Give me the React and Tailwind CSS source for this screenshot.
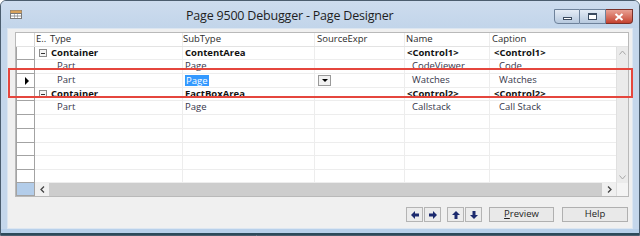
import React from "react";

const rows = [
  { h: "h-[13px]", kind: "container", type: "Container", sub: "ContentArea", name: "<Control1>", cap: "<Control1>" },
  { h: "h-[14px]", kind: "part", type: "Part", sub: "Page", name: "CodeViewer", cap: "Code" },
  { h: "h-[14px]", kind: "part", type: "Part", sub: "Page", name: "Watches", cap: "Watches", current: true },
  { h: "h-[13px]", kind: "container", type: "Container", sub: "FactBoxArea", name: "<Control2>", cap: "<Control2>" },
  { h: "h-[14px]", kind: "part", type: "Part", sub: "Page", name: "Callstack", cap: "Call Stack" },
  { h: "h-[14px]", kind: "empty" },
  { h: "h-[14px]", kind: "empty" },
  { h: "h-[13px]", kind: "empty" },
  { h: "h-[14px]", kind: "empty" },
  { h: "h-[13px]", kind: "empty" },
];

const ExpandBox = () => (
  <span className="flex items-center justify-center w-[8px] h-[8px] border border-[#8c8c8c] bg-[#f4f4f4] ml-[4px]">
    <span className="block w-[4px] h-[1px] bg-[#333]" />
  </span>
);

const GridRow = ({ r }) => {
  const bold = r.kind === "container";
  const indent = r.kind === "part";
  const txt = bold ? "font-bold text-[#111]" : "text-[#36364a]";
  return (
    <div className={`flex ${r.h}`}>
      <div className="w-[19px] border border-t-0 border-[#a3a3a3] bg-white flex items-center justify-center">
        {r.current && (
          <span className="block w-0 h-0 border-y-[4px] border-y-transparent border-l-[4px] border-l-black ml-[2px]" />
        )}
      </div>
      <div className="w-[14px] border-b border-[#ededed] flex items-center">
        {bold && <ExpandBox />}
      </div>
      <div className={`w-[134px] border-b border-r border-[#ededed] flex items-center ${indent ? "pl-[8px]" : "pl-[2px]"} ${txt}`}>
        {r.type}
      </div>
      <div className={`w-[132px] border-b border-r border-[#ededed] flex items-center pl-[2px] ${txt}`}>
        {r.current ? (
          <span className="bg-[#3399ff] text-white leading-[11px] px-[1px]">{r.sub}</span>
        ) : (
          r.sub
        )}
      </div>
      <div className="w-[90px] border-b border-r border-[#ededed] flex items-center pl-[3px]">
        {r.current && (
          <span className="flex items-center justify-center w-[13px] h-[11px] border border-[#9a9a9a] bg-[#f2f2f2]">
            <span className="block w-0 h-0 border-x-[3px] border-x-transparent border-t-[3px] border-t-black" />
          </span>
        )}
      </div>
      <div className={`w-[85px] border-b border-r border-[#ededed] flex items-center ${indent ? "pl-[7px]" : "pl-[2px]"} ${txt}`}>
        {r.name}
      </div>
      <div className={`w-[126px] border-b border-[#ededed] flex items-center ${indent ? "pl-[9px]" : "pl-[4px]"} ${txt}`}>
        {r.cap}
      </div>
    </div>
  );
};

const ArrowBtn = ({ dir }) => {
  const paths = {
    left: "M1 5 L5 1 L5 3.5 L9 3.5 L9 6.5 L5 6.5 L5 9 Z",
    right: "M9 5 L5 1 L5 3.5 L1 3.5 L1 6.5 L5 6.5 L5 9 Z",
    up: "M5 1 L9 5 L6.5 5 L6.5 9 L3.5 9 L3.5 5 L1 5 Z",
    down: "M5 9 L9 5 L6.5 5 L6.5 1 L3.5 1 L3.5 5 L1 5 Z",
  };
  return (
    <div className="w-[17px] h-[15px] border border-[#b4b4b4] bg-[#ececec] flex items-center justify-center">
      <svg width="10" height="10" viewBox="0 0 10 10">
        <path d={paths[dir]} fill="#1c2a6e" />
      </svg>
    </div>
  );
};

const App = () => {
  return (
    <div
      className="relative w-[640px] h-[236px] overflow-hidden bg-[#c5d7eb] border border-[#4b5d6e] rounded-t-[6px] flex flex-col text-[9.5px]"
      style={{ fontFamily: '"Open Sans", "Noto Sans", sans-serif' }}
    >
      {/* title bar */}
      <div className="h-[27px] flex items-center relative shrink-0 bg-gradient-to-b from-[#cddcee] to-[#c2d5ea]">
        <svg width="12" height="9" viewBox="0 0 12 9" className="ml-[9px]">
          <rect x="0" y="0" width="12" height="9" fill="#7a7a7a" />
          <rect x="0.5" y="0.5" width="11" height="2.5" fill="#d9a25a" />
          <rect x="1" y="4" width="3" height="1.6" fill="#fff" />
          <rect x="4.5" y="4" width="3" height="1.6" fill="#fff" />
          <rect x="8" y="4" width="3" height="1.6" fill="#fff" />
          <rect x="1" y="6.4" width="3" height="1.6" fill="#fff" />
          <rect x="4.5" y="6.4" width="3" height="1.6" fill="#fff" />
          <rect x="8" y="6.4" width="3" height="1.6" fill="#fff" />
        </svg>
        <div className="absolute left-[185px] top-[6px] text-[12.5px] text-[#1e1e1e] tracking-[-0.2px]">
          Page 9500 Debugger - Page Designer
        </div>
        <div className="ml-auto mr-[6px] mt-[4px] flex">
          <div className="w-[26px] h-[15px] rounded-bl-[4px] border border-[#6e829b] bg-gradient-to-b from-[#e4ecf6] to-[#b7c9de] flex items-center justify-center">
            <span className="block w-[9px] h-[3px] border border-[#3b4b60] bg-white mt-[4px]" />
          </div>
          <div className="w-[26px] h-[15px] border border-l-0 border-[#6e829b] bg-gradient-to-b from-[#e4ecf6] to-[#b7c9de] flex items-center justify-center">
            <span className="block w-[9px] h-[7px] border border-[#3b4b60] border-t-2 bg-white" />
          </div>
          <div className="w-[27px] h-[15px] rounded-br-[4px] border border-l-0 border-[#7a3028] bg-gradient-to-b from-[#e8a093] to-[#c4412f] flex items-center justify-center">
            <svg width="10" height="8" viewBox="0 0 10 8">
              <path d="M1.5 1 L8.5 7 M8.5 1 L1.5 7" stroke="#fff" strokeWidth="2" />
            </svg>
          </div>
        </div>
      </div>

      {/* client area */}
      <div className="mx-[6px] h-[201px] bg-[#f0f0f0] border border-[#dce6f1] pt-[3px] pl-[7px] shrink-0">
        <div className="w-[614px] border border-[#b9b9b9] bg-white flex flex-col">
          {/* header */}
          <div className="flex h-[14px] border-b border-[#e3e3e3] text-[#2c2c2c]">
            <div className="w-[19px] border-r border-[#d5d5d5]" />
            <div className="w-[14px] pl-[1px] flex items-center">E..</div>
            <div className="w-[134px] border-r border-[#ededed] flex items-center pl-[1px]">Type</div>
            <div className="w-[132px] border-r border-[#ededed] flex items-center">SubType</div>
            <div className="w-[90px] border-r border-[#ededed] flex items-center pl-[2px]">SourceExpr</div>
            <div className="w-[85px] border-r border-[#ededed] flex items-center pl-[1px]">Name</div>
            <div className="w-[126px] flex items-center pl-[2px]">Caption</div>
            <div className="w-[12px]" />
          </div>
          <div className="flex">
            <div className="flex flex-col">
              {rows.map((r, i) => (
                <GridRow key={i} r={r} />
              ))}
            </div>
            <div className="w-[12px] bg-[#ebebeb] border-l border-[#e0e0e0] flex flex-col items-center justify-between py-[3px]">
              <svg width="7" height="5" viewBox="0 0 7 5">
                <path d="M0.5 4.5 L3.5 1 L6.5 4.5" stroke="#a8a8a8" fill="none" />
              </svg>
              <svg width="7" height="5" viewBox="0 0 7 5">
                <path d="M0.5 0.5 L3.5 4 L6.5 0.5" stroke="#a8a8a8" fill="none" />
              </svg>
            </div>
          </div>
          {/* horizontal scrollbar */}
          <div className="flex h-[13px]">
            <div className="w-[19px] bg-[#b3cdea] border border-t-0 border-[#a3a3a3]" />
            <div className="w-[14px] bg-[#f0f0f0] flex items-center justify-center">
              <svg width="5" height="7" viewBox="0 0 5 7">
                <path d="M4 0.5 L1 3.5 L4 6.5" stroke="#444" strokeWidth="1.3" fill="none" />
              </svg>
            </div>
            <div className="w-[553px] bg-[#cdcdcd]" />
            <div className="w-[14px] bg-[#f0f0f0] flex items-center justify-center">
              <svg width="5" height="7" viewBox="0 0 5 7">
                <path d="M1 0.5 L4 3.5 L1 6.5" stroke="#444" strokeWidth="1.3" fill="none" />
              </svg>
            </div>
            <div className="w-[12px] bg-[#f4f4f4] border-l border-[#dcdcdc]" />
          </div>
        </div>

        {/* buttons */}
        <div className="flex items-center mt-[10px] pl-[391px] text-[#1e1e1e]">
          <ArrowBtn dir="left" />
          <div className="ml-[1px]">
            <ArrowBtn dir="right" />
          </div>
          <div className="ml-[6px]">
            <ArrowBtn dir="up" />
          </div>
          <div className="ml-[1px]">
            <ArrowBtn dir="down" />
          </div>
          <div className="ml-[7px] w-[65px] h-[15px] border border-[#b0b0b0] bg-[#e9e9e9] flex items-center justify-center">
            <span>
              <span className="underline">P</span>review
            </span>
          </div>
          <div className="ml-[8px] w-[66px] h-[15px] border border-[#b0b0b0] bg-[#e9e9e9] flex items-center justify-center">
            Help
          </div>
        </div>
      </div>

      {/* bottom frame */}
      <div className="flex-1 bg-[#b8d0ea] border-b-2 border-[#2d4a5a]" />

      {/* red annotation rectangle */}
      <div className="absolute left-[7px] top-[67px] w-[625px] h-[30px] border-2 border-[#e5463d]" />
    </div>
  );
};

export default App;
